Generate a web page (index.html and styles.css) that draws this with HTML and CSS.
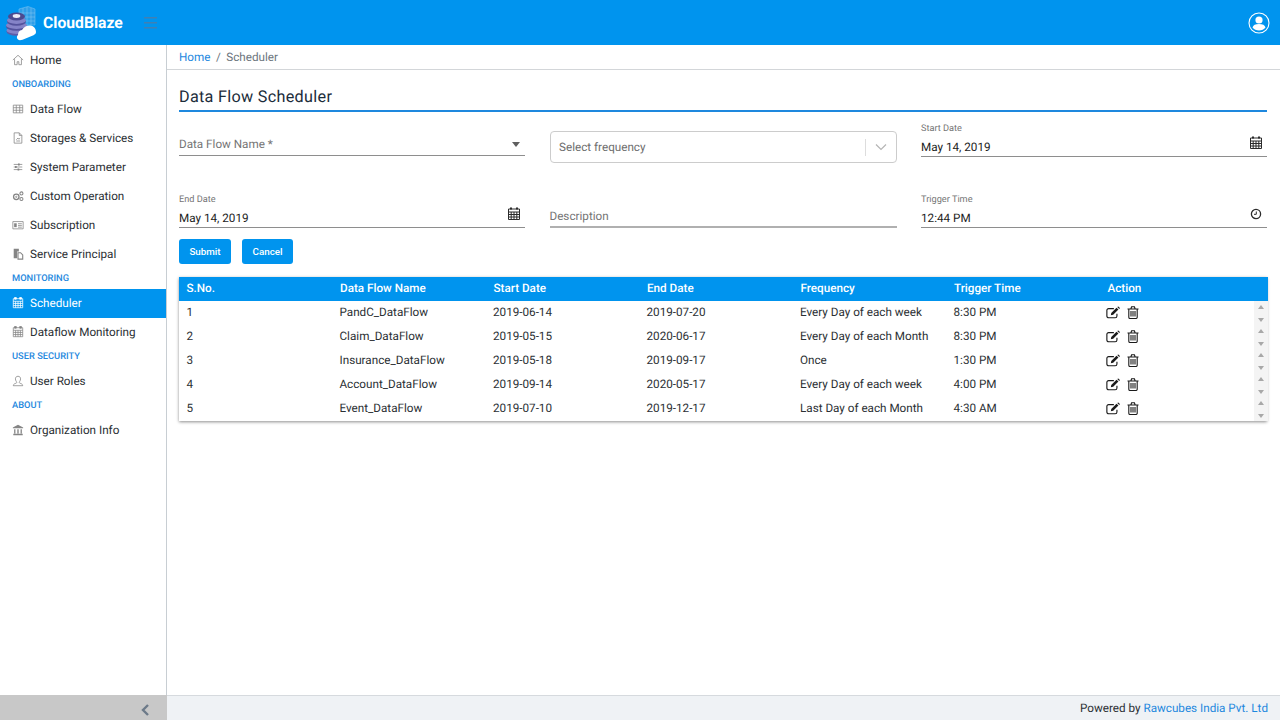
FILE: index.html
```html
<!DOCTYPE html>
<html lang="en">
<head>
<meta charset="utf-8">
<title>CloudBlaze - Data Flow Scheduler</title>
<link rel="stylesheet" href="styles.css">
</head>
<body>
<svg class="defs" width="0" height="0" aria-hidden="true">
  <symbol id="i-cal" viewBox="0 0 14 14"><path fill="currentColor" d="M3 0.5h2v2h-2zM9 0.5h2v2h-2z"/><path fill="none" stroke="currentColor" d="M1.5 2h11v10.5h-11zM1.5 5h11M1.5 7.5h11M1.5 10h11M4.2 5v7.5M7 5v7.5M9.8 5v7.5"/></symbol>
  <symbol id="i-edit" viewBox="0 0 16 14"><path fill="none" stroke="currentColor" stroke-width="1.3" d="M12.500 8.500v2.500a2 2 0 0 1-2 2H3a2 2 0 0 1-2-2V4.500a2 2 0 0 1 2-2h6"/><path fill="currentColor" d="M6 7.500L12 1.500l2.200 2.200L8.200 9.700l-2.700.5zM12.900.7l.5-.4a.8.8 0 0 1 1 0l1.200 1.200a.8.8 0 0 1 0 1l-.5.5z"/></symbol>
  <symbol id="i-trash" viewBox="0 0 12 13"><path fill="none" stroke="currentColor" stroke-width="1.100" d="M.5 3h11M1.800 3v8.300a1.200 1.200 0 0 0 1.200 1.200h6a1.200 1.200 0 0 0 1.200-1.200V3M3.800 3l.8-2.300h2.800l.8 2.300M4 5v5.500M6 5v5.500M8 5v5.500"/></symbol>
</svg>
<div class="app">
  <header class="topbar">
    <div class="brand">
      <svg class="logo" width="33" height="36" viewBox="0 0 33 36">
        <path d="M14 4l9-2.500 7 2.500v16H14z" fill="#2f9fe9" stroke="#86c9f3" stroke-width=".5"/>
        <path d="M18 3v17M22 2v18M26 3v17M14 8h16M14 12h16M14 16h16" stroke="#86c9f3" stroke-width=".5"/>
        <ellipse cx="11.500" cy="26.500" rx="10" ry="4.300" fill="#5d5ba8"/>
        <ellipse cx="11.500" cy="25.300" rx="10" ry="3.600" fill="#8583c8"/>
        <ellipse cx="11.500" cy="21.500" rx="10.500" ry="4.300" fill="#54529c"/>
        <ellipse cx="11.500" cy="20.300" rx="10.500" ry="3.600" fill="#8583c8"/>
        <ellipse cx="11.500" cy="16.500" rx="9.500" ry="4.300" fill="#54529c"/>
        <ellipse cx="11.500" cy="15.300" rx="9.500" ry="3.600" fill="#8583c8"/>
        <ellipse cx="11.500" cy="11.500" rx="8.500" ry="4" fill="#4c4a90"/>
        <ellipse cx="11.500" cy="11" rx="3.800" ry="1.900" fill="#eceaf6"/>
        <path d="M13 34.500c-1.500-1-1.500-3.300 0-4.500 0-3 1.500-4.500 4-5 1.500-3 5-5 8.500-4.500 3.500.5 5.500 3.500 5.500 6.500 0 1.500-1 2.500-2.500 3.200l-11 4.500c-1.800.5-3.500.7-4.500-.2z" fill="#fff"/>
      </svg>
      <span class="brand-name">CloudBlaze</span>
      <svg class="burger" width="13" height="12" viewBox="0 0 13 12"><path d="M0 0h13v1.500H0zM0 5h13v1.500H0zM0 10h13v1.500H0z" fill="#3f80b4"/></svg>
    </div>
    <svg class="user" width="22" height="22" viewBox="0 0 22 22">
      <circle cx="11" cy="11" r="10" fill="none" stroke="#fff" stroke-width="1.100"/>
      <circle cx="11" cy="8" r="3.600" fill="#fff"/>
      <path d="M4.500 15.500c.5-2.500 3-3.500 6.500-3.500s6 1 6.500 3.500c-1.500 2-3.800 3-6.500 3s-5-1-6.500-3z" fill="#fff"/>
    </svg>
  </header>
  <div class="shell">
    <aside class="sidebar">
      <nav class="nav">
        <a class="nav-item"><svg class="nav-icon" viewBox="0 0 14 14"><path d="M1 7l6-5.500L13 7M3 6v6.500h3V9h2v3.500h3V6"/></svg>Home</a>
        <div class="nav-title">ONBOARDING</div>
        <a class="nav-item"><svg class="nav-icon" viewBox="0 0 14 14"><path d="M1.500 2.500h11v9h-11zM1.500 5.500h11M1.500 8.500h11M5 2.500v9M9 2.500v9"/></svg>Data Flow</a>
        <a class="nav-item"><svg class="nav-icon" viewBox="0 0 14 14"><path d="M2.500 1h6l3 3v9h-9zM8.500 1v3h3M5 9l2-2 1 1.500L9.500 7M5 10.500h4.500"/></svg>Storages &amp; Services</a>
        <a class="nav-item"><svg class="nav-icon" viewBox="0 0 14 14"><path d="M2 4h10M2 7h10M2 10h10"/><path class="solid" d="M7 2.800h2v2.400h-2zM3.500 5.800h2v2.400h-2zM6.500 8.800h2v2.400h-2z"/></svg>System Parameter</a>
        <a class="nav-item"><svg class="nav-icon" viewBox="0 0 14 14"><circle cx="5" cy="8" r="3.200" stroke-width="1.500"/><circle cx="5" cy="8" r=".8"/><circle cx="11" cy="4" r="1.800" stroke-width="1.200"/><circle cx="11" cy="10.500" r="1.800" stroke-width="1.200"/></svg>Custom Operation</a>
        <a class="nav-item"><svg class="nav-icon" viewBox="0 0 14 14"><path d="M1 3h12v8.500H1z"/><path class="solid" d="M2.500 5h3v4.500h-3z"/><path d="M7 5.500h4.500M7 7.500h4.500M7 9.500h4.500"/></svg>Subscription</a>
        <a class="nav-item"><svg class="nav-icon" viewBox="0 0 14 14"><path class="solid" d="M2 1h6v3H6v8H2z"/><path stroke-width="1.300" d="M7 5.500h3l2.500 2.500v5H7z"/></svg>Service Principal</a>
        <div class="nav-title">MONITORING</div>
        <a class="nav-item active"><svg class="nav-icon" viewBox="0 0 14 14"><use href="#i-cal"/></svg>Scheduler</a>
        <a class="nav-item"><svg class="nav-icon" viewBox="0 0 14 14"><use href="#i-cal"/></svg>Dataflow Monitoring</a>
        <div class="nav-title">USER SECURITY</div>
        <a class="nav-item"><svg class="nav-icon" viewBox="0 0 14 14"><path d="M1.500 12.500c0-2 2-2.500 3.500-3 .7-.5.5-1.300 0-2C4.300 6.500 4 5.500 4 4.500 4 2.500 5.300 1.500 7 1.500s3 1 3 3c0 1-.3 2-1 3-.5.700-.7 1.500 0 2 1.500.5 3.500 1 3.500 3z"/></svg>User Roles</a>
        <div class="nav-title">ABOUT</div>
        <a class="nav-item"><svg class="nav-icon" viewBox="0 0 14 14"><path class="solid" d="M7 1l6 3v1H1V4zM2.500 6h1.500v5H2.500zM6.200 6h1.600v5H6.200zM10 6h1.500v5H10zM1.500 11.500h11V13h-11z"/></svg>Organization Info</a>
      </nav>
      <div class="side-foot">
        <svg width="9" height="12" viewBox="0 0 9 12"><path d="M7 1L2 6l5 5" fill="none" stroke="#6c7a89" stroke-width="2.400"/></svg>
      </div>
    </aside>
    <main class="main">
      <div class="crumbs"><a class="link">Home</a><span class="sep">/</span><span>Scheduler</span></div>
      <section class="content">
        <h1 class="page-title">Data Flow Scheduler</h1>
        <form class="form-grid">
          <div class="field field-name">
            <span class="placeholder">Data Flow Name *</span>
            <span class="caret"></span>
          </div>
          <div class="select-box">
            <span class="select-text">Select frequency</span>
            <span class="select-sep"></span>
            <svg class="chev" width="12" height="8" viewBox="0 0 12 8"><path d="M1 1.500l5 5 5-5" fill="none" stroke="#b5b5b5" stroke-width="1.200"/></svg>
          </div>
          <div class="field field-dated">
            <label class="mini-label">Start Date</label>
            <div class="value-row"><span>May 14, 2019</span><svg class="field-icon" width="14" height="14"><use href="#i-cal"/></svg></div>
          </div>
          <div class="field field-dated">
            <label class="mini-label">End Date</label>
            <div class="value-row"><span>May 14, 2019</span><svg class="field-icon" width="14" height="14"><use href="#i-cal"/></svg></div>
          </div>
          <div class="field field-desc"><span class="placeholder">Description</span></div>
          <div class="field field-dated">
            <label class="mini-label">Trigger Time</label>
            <div class="value-row"><span>12:44 PM</span><svg class="field-icon" width="14" height="14" viewBox="0 0 14 14"><circle cx="7" cy="7" r="4.600" fill="none" stroke="currentColor" stroke-width="1.300"/><path d="M7.300 4.500v2.800H5" fill="none" stroke="currentColor"/></svg></div>
          </div>
        </form>
        <div class="actions">
          <button class="btn" type="button">Submit</button>
          <button class="btn" type="button">Cancel</button>
        </div>
        <div class="table-card">
          <table class="grid">
            <thead>
              <tr><th>S.No.</th><th>Data Flow Name</th><th>Start Date</th><th>End Date</th><th>Frequency</th><th>Trigger Time</th><th>Action</th><th class="sb"></th></tr>
            </thead>
            <tbody>
              <tr><td>1</td><td>PandC_DataFlow</td><td>2019-06-14</td><td>2019-07-20</td><td>Every Day of each week</td><td>8:30 PM</td><td><span class="acts"><svg class="ic-edit"><use href="#i-edit"/></svg><svg class="ic-trash"><use href="#i-trash"/></svg></span></td><td class="sb"><span class="up"></span><span class="down"></span></td></tr>
              <tr><td>2</td><td>Claim_DataFlow</td><td>2019-05-15</td><td>2020-06-17</td><td>Every Day of each Month</td><td>8:30 PM</td><td><span class="acts"><svg class="ic-edit"><use href="#i-edit"/></svg><svg class="ic-trash"><use href="#i-trash"/></svg></span></td><td class="sb"><span class="up"></span><span class="down"></span></td></tr>
              <tr><td>3</td><td>Insurance_DataFlow</td><td>2019-05-18</td><td>2019-09-17</td><td>Once</td><td>1:30 PM</td><td><span class="acts"><svg class="ic-edit"><use href="#i-edit"/></svg><svg class="ic-trash"><use href="#i-trash"/></svg></span></td><td class="sb"><span class="up"></span><span class="down"></span></td></tr>
              <tr><td>4</td><td>Account_DataFlow</td><td>2019-09-14</td><td>2020-05-17</td><td>Every Day of each week</td><td>4:00 PM</td><td><span class="acts"><svg class="ic-edit"><use href="#i-edit"/></svg><svg class="ic-trash"><use href="#i-trash"/></svg></span></td><td class="sb"><span class="up"></span><span class="down"></span></td></tr>
              <tr><td>5</td><td>Event_DataFlow</td><td>2019-07-10</td><td>2019-12-17</td><td>Last Day of each Month</td><td>4:30 AM</td><td><span class="acts"><svg class="ic-edit"><use href="#i-edit"/></svg><svg class="ic-trash"><use href="#i-trash"/></svg></span></td><td class="sb"><span class="up"></span><span class="down"></span></td></tr>
            </tbody>
          </table>
        </div>
      </section>
      <footer class="foot">Powered by&nbsp;<a class="link">Rawcubes India Pvt. Ltd</a></footer>
    </main>
  </div>
</div>
</body>
</html>
```
FILE: styles.css
```css
* { box-sizing: border-box; }
html, body { margin: 0; height: 100%; }
body { font-family: Roboto, "Liberation Sans", sans-serif; font-size: 11.7px; color: #2b3034; background: #fff; overflow: hidden; text-rendering: geometricPrecision; }
.defs { position: absolute; }
.app { height: 720px; display: flex; flex-direction: column; }

.topbar { height: 45px; flex: none; background: #0094ee; display: flex; align-items: center; justify-content: space-between; padding: 0 10px 0 5px; }
.brand { display: flex; align-items: center; height: 45px; }
.logo { display: block; }
.brand-name { color: #fff; font-size: 15.7px; font-weight: 700; margin-left: 5px; width: 101px; }
.burger { display: block; flex: none; }
.user { display: block; }

.shell { flex: 1; display: flex; min-height: 0; }
.sidebar { width: 167px; flex: none; display: flex; flex-direction: column; border-right: 1px solid #c8ced3; background: #fff; }
.nav { flex: 1; padding-top: .5px; }
.nav-item { height: 29px; display: flex; align-items: center; padding-left: 12px; color: #2b3034; font-size: 11.7px; }
.nav-item.active { background: #0094ee; color: #fff; }
.nav-icon { width: 12px; height: 12px; margin-right: 6px; flex: none; fill: none; stroke: #858585; stroke-width: .9; color: #858585; }
.nav-icon .solid { fill: #858585; stroke: none; }
.active .nav-icon { color: #fff; stroke: #fff; }
.nav-title { height: 20px; line-height: 20px; padding-left: 12px; color: #1e88de; font-size: 9.3px; font-weight: 500; }
.side-foot { height: 25px; flex: none; background: #c8c8c8; display: flex; align-items: center; justify-content: flex-end; padding: 5px 17px 0 0; margin-right: -1px; }

.main { flex: 1; min-width: 0; display: flex; flex-direction: column; }
.crumbs { height: 25px; flex: none; display: flex; align-items: center; gap: 5.5px; padding-left: 12px; border-bottom: 1px solid #d3d6d9; color: #6c757d; font-size: 11.7px; }
.link { color: #1e88de; }
.content { flex: 1; padding: 0 13px 0 12px; }
.page-title { margin: 16px 0 0; height: 26px; font-size: 16.2px; font-weight: 400; line-height: 22px; color: #1b2c3a; letter-spacing: .3px; border-bottom: 2px solid #1e88de; }

.form-grid { display: grid; grid-template-columns: 346px 347px 346px; column-gap: 24.5px; grid-auto-rows: 71px; margin-top: 10px; }
.field { height: 35px; border-bottom: 1px solid #8e8e8e; display: flex; flex-direction: column; justify-content: flex-end; }
.field-dated { padding-bottom: 1px; }
.field-name { height: 34px; padding-bottom: 4px; flex-direction: row; align-items: flex-end; justify-content: space-between; }
.field-desc { padding-bottom: 3px; border-bottom-color: #b0b0b0; border-bottom-width: 2px; }
.placeholder { color: #757575; font-size: 11.7px; }
.caret { width: 0; height: 0; border: 4.5px solid transparent; border-top: 5px solid #5f5f5f; border-bottom: 0; margin: 0 5px 4px 0; }
.select-box { height: 32px; margin-top: 9px; border: 1px solid #ccc; border-radius: 4px; display: flex; align-items: center; padding: 0 9px 0 8.5px; }
.select-text { flex: 1; color: #6e6e6e; font-size: 11.7px; }
.select-sep { width: 1px; height: 17px; background: #ddd; margin-right: 9px; }
.mini-label { font-size: 9.2px; color: #757575; line-height: 12px; margin-bottom: 4px; }
.value-row { display: flex; justify-content: space-between; align-items: center; height: 16px; font-size: 11.7px; color: #1c1c1c; padding-right: 4px; }
.field-icon { color: #2b2b2b; margin-top: -9px; }

.actions { display: flex; gap: 11px; margin-top: -25px; }
.btn { height: 25px; width: 52px; border: 0; border-radius: 3px; background: #0094ee; color: #fff; font: 500 9.8px Roboto, sans-serif; padding: 0; }
.btn + .btn { width: 51px; }

.table-card { margin-top: 13px; box-shadow: 0 1px 3px rgba(0,0,0,.45); }
.grid { width: 100%; border-collapse: collapse; table-layout: fixed; font-size: 11.7px; }
.grid th { height: 24px; background: #0094ee; color: #fff; font-weight: 500; text-align: left; padding: 0 0 2px 7.5px; width: 153.5px; }
.grid td { height: 24px; padding: 0 0 2px 7px; color: #2b3034; width: 153.5px; }
.grid td:first-child { padding-left: 7.5px; }
.grid .sb { width: 14px; padding: 0; }
.grid td.sb { background: #f4f4f4; }
.sb .up, .sb .down { display: block; width: 0; height: 0; margin: 0 auto; border: 3px solid transparent; }
.sb .up { border-top: 0; border-bottom: 4px solid #a8a8a8; margin-bottom: 9px; }
.sb .down { border-bottom: 0; border-top: 4px solid #a8a8a8; }
.acts { display: flex; align-items: center; gap: 7.5px; color: #1a1a1a; margin-left: -1.5px; }
.ic-edit { display: block; width: 14px; height: 13px; }
.ic-trash { display: block; width: 12px; height: 13px; }

.foot { height: 25px; flex: none; background: #eff2f5; border-top: 1px solid #d6dade; display: flex; align-items: center; justify-content: flex-end; padding-right: 12px; font-size: 11.7px; color: #2b3034; }
```
